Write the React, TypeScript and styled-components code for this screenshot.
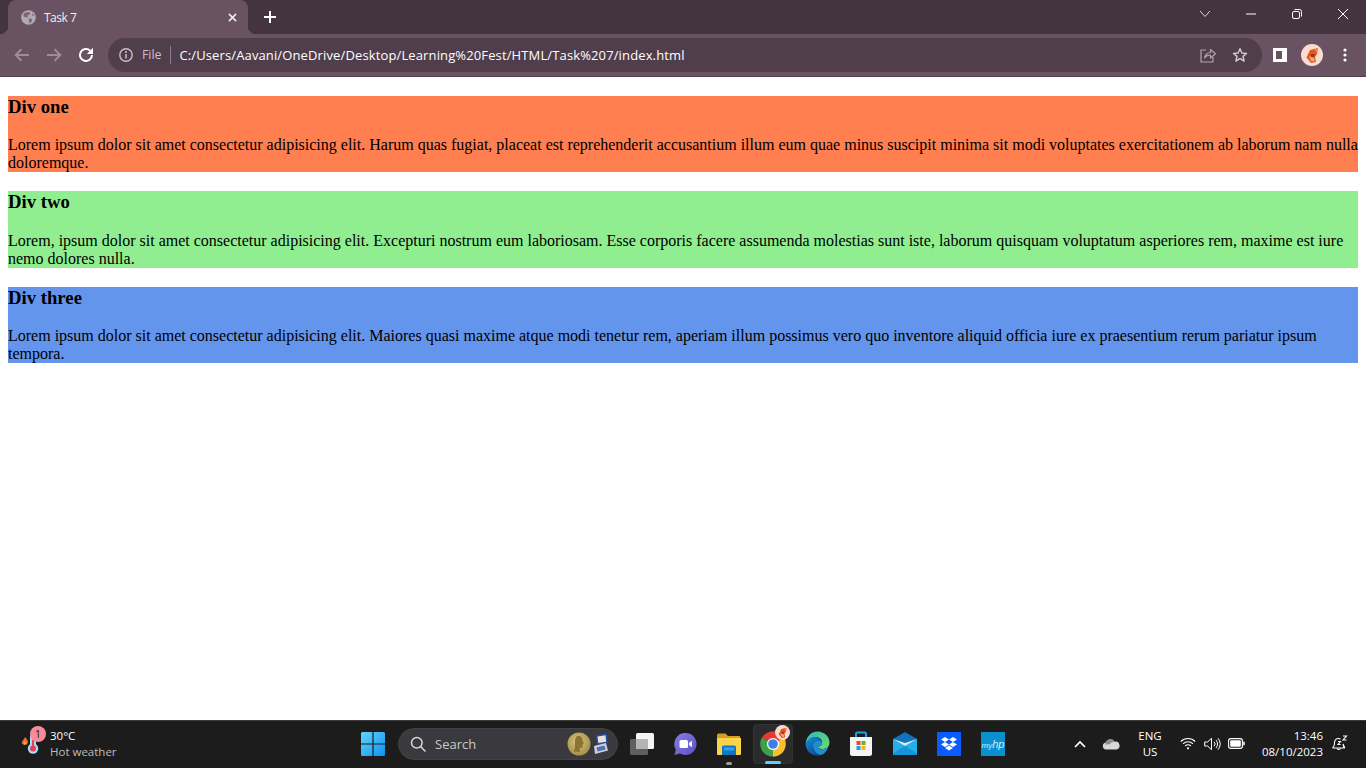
import React from "react";
import styled, { createGlobalStyle } from "styled-components";

const Global = createGlobalStyle`
  html, body { margin: 0; padding: 0; height: 100%; overflow: hidden; background: #fff; }
  #root { height: 100%; }
`;

const uiFont = `"Open Sans", "Noto Sans", "Liberation Sans", sans-serif`;

const Screen = styled.div`
  height: 768px;
  width: 1366px;
  display: flex;
  flex-direction: column;
  font-family: ${uiFont};
`;

const TitleBar = styled.div`
  height: 34px;
  background: #443340;
  display: flex;
  align-items: stretch;
  padding-left: 8px;
  flex: none;
`;

const Tab = styled.div`
  width: 240px;
  background: #695262;
  border-radius: 8px 8px 0 0;
  display: flex;
  align-items: center;
  padding: 0 11px 0 13px;
  box-sizing: border-box;
  position: relative;
  &::before, &::after {
    content: "";
    position: absolute;
    bottom: 0;
    width: 8px;
    height: 8px;
  }
  &::before { left: -8px; background: radial-gradient(circle at 0 0, #443340 8px, #695262 8.5px); }
  &::after { right: -8px; background: radial-gradient(circle at 100% 0, #443340 8px, #695262 8.5px); }
`;

const TabTitle = styled.span`
  flex: 1;
  margin-left: 8px;
  font-size: 12px;
  letter-spacing: -0.5px;
  color: #f1eef0;
`;

const NewTab = styled.div`
  width: 44px;
  display: flex;
  align-items: center;
  justify-content: center;
`;

const Spacer = styled.div`
  flex: 1;
`;

const WinButton = styled.div`
  width: 46px;
  display: flex;
  align-items: center;
  justify-content: center;
  margin-top: -6px;
`;

const Toolbar = styled.div`
  height: 42px;
  background: #695262;
  display: flex;
  align-items: center;
  padding: 0 5px 0 6px;
  border-bottom: 1px solid #54414f;
  flex: none;
`;

const ToolButton = styled.div`
  width: 32px;
  height: 32px;
  flex: none;
  display: flex;
  align-items: center;
  justify-content: center;
`;

const MenuButton = styled(ToolButton)`
  margin-left: 1px;
`;

const Omnibox = styled.div`
  flex: 1;
  height: 34px;
  margin: 0 2px 0 6px;
  background: #503e4c;
  border-radius: 17px;
  display: flex;
  align-items: center;
  padding: 0 6px 0 10px;
`;

const FileLabel = styled.span`
  font-size: 12.5px;
  letter-spacing: -0.1px;
  color: #c9bfc6;
  margin-left: 8px;
  padding-right: 9px;
  border-right: 1px solid #8b7b87;
  line-height: 18px;
`;

const Url = styled.span`
  flex: 1;
  margin-left: 8px;
  font-size: 13px;
  letter-spacing: 0.13px;
  color: #fff;
  white-space: nowrap;
`;

const Page = styled.main`
  flex: 1;
  background: #fff;
  padding: 18.72px 8px 0;
  font-family: "Liberation Serif", "Times New Roman", serif;
  font-size: 16px;
  color: #000;
`;

const Block = styled.section<{ $bg: string }>`
  background: ${(p) => p.$bg};
  margin-bottom: 18.72px;
`;

const Heading = styled.h3`
  font-size: 18.72px;
  font-weight: bold;
  margin: 0 0 18.72px;
`;

const Taskbar = styled.footer`
  height: 48px;
  box-sizing: border-box;
  background: #1c1c1c;
  border-top: 1px solid #3a3a3a;
  padding-bottom: 2px;
  display: flex;
  align-items: center;
  color: #fff;
  flex: none;
`;

const Weather = styled.div`
  width: 351px;
  flex: none;
  display: flex;
  align-items: center;
  padding-left: 18px;
  box-sizing: border-box;
`;

const WeatherIcon = styled.div`
  width: 26px;
  height: 32px;
  position: relative;
  flex: none;
`;

const Badge = styled.span`
  position: absolute;
  left: 12px;
  top: -2px;
  width: 16px;
  height: 16px;
  border-radius: 50%;
  background: #fb8a98;
  color: #1c1c1c;
  font-size: 11px;
  line-height: 16px;
  text-align: center;
`;

const WeatherText = styled.div`
  margin-left: 6px;
  font-size: 11.5px;
  line-height: 16px;
`;

const Muted = styled.div`
  color: #bdbdbd;
`;

const AppSlot = styled.div<{ $active?: boolean }>`
  width: 44px;
  height: 44px;
  flex: none;
  display: flex;
  align-items: center;
  justify-content: center;
  position: relative;
  &::before {
    content: "";
    display: ${(p) => (p.$active ? "block" : "none")};
    position: absolute;
    inset: 2px;
    background: #2b2b2d;
    border: 1px solid #333;
    border-radius: 4px;
  }
  & > svg {
    position: relative;
  }
`;

const Indicator = styled.span<{ $on?: boolean }>`
  position: absolute;
  bottom: ${(p) => (p.$on ? "2px" : "1px")};
  left: 50%;
  transform: translateX(-50%);
  width: ${(p) => (p.$on ? "16px" : "6px")};
  height: 3px;
  border-radius: 2px;
  background: ${(p) => (p.$on ? "#60cdff" : "#9a9a9a")};
`;

const SearchBox = styled.div`
  width: 220px;
  height: 32px;
  margin: 0 1px 0 3px;
  flex: none;
  box-sizing: border-box;
  background: #3a3a3e;
  border-radius: 16px;
  border: 1px solid #434347;
  display: flex;
  align-items: center;
  padding: 0 8px 0 11px;
`;

const SearchText = styled.span`
  flex: 1;
  margin-left: 9px;
  font-size: 13px;
  color: #c8c8c8;
`;

const Tray = styled.div`
  flex: 1;
  display: flex;
  align-items: center;
  justify-content: flex-end;
  padding-right: 11px;
`;

const TrayIcon = styled.div<{ $w: number }>`
  width: ${(p) => p.$w}px;
  flex: none;
  display: flex;
  align-items: center;
  justify-content: center;
`;

const Lang = styled.div`
  width: 46px;
  text-align: center;
  font-size: 11.5px;
  line-height: 16px;
  flex: none;
`;

const Clock = styled.div`
  width: 72px;
  text-align: right;
  font-size: 11.5px;
  line-height: 16px;
  flex: none;
`;

const Line = styled.div`
  white-space: nowrap;
`;

const OverlayGem = styled.span`
  position: absolute;
  top: 3px;
  right: 5px;
  line-height: 0;
`;

const MyHp = styled.div`
  width: 24px;
  height: 24px;
  background: #0a8fcf;
  color: #d5ecf7;
  font-family: "Liberation Sans", sans-serif;
  font-style: italic;
  font-size: 8px;
  line-height: 24px;
  text-align: center;
  & > span {
    font-size: 11px;
  }
`;

const Globe = () => (
  <svg width="15" height="15" viewBox="0 0 16 16">
    <circle cx="8" cy="8" r="7.8" fill="#b4a9b1" />
    <path d="M3 3.5 L7 2 L10 3 L9 5 L7 5.5 L7.5 7.5 L5 8 L2.5 6.5Z M8 9 L12 9.5 L11.5 12 L9.5 14.5 L8.5 12Z M12 3 L14.5 6 L12.5 6.5Z" fill="#7a6674" />
  </svg>
);

const Chrome = () => (
  <svg width="28" height="28" viewBox="0 0 48 48">
    <path d="M24 24 L5 13 A22 22 0 0 1 43 13Z" fill="#e33b2e" />
    <path d="M24 24 L43 13 A22 22 0 0 1 24 46Z" fill="#fbc02d" />
    <path d="M24 24 L24 46 A22 22 0 0 1 5 13Z" fill="#3da14a" />
    <circle cx="24" cy="24" r="10.5" fill="#fff" />
    <circle cx="24" cy="24" r="8.3" fill="#3f7fe8" />
  </svg>
);

const Gem = ({ size }: { size: number }) => (
  <svg width={size} height={size} viewBox="0 0 22 22">
    <circle cx="11" cy="11" r="11" fill="#fbdcd2" />
    <path d="M9 6 L17 4 L16 10 L14 13 L15 18 L10 19 L5.5 13.5Z" fill="#e8561a" />
    <path d="M8 12 L13 14 L13.5 17.5 L10 17Z" fill="#f5a878" />
    <path d="M10 10 L14 10 L13 13 L9.5 12.5Z" fill="#8a3d16" />
    <path d="M13.5 5.5 L17 4 L16 8.5Z" fill="#f68a4e" />
  </svg>
);

export default function App() {
  return (
    <Screen>
      <Global />
      <TitleBar>
        <Tab>
          <Globe />
          <TabTitle>Task 7</TabTitle>
          <svg width="9" height="9" viewBox="0 0 10 10"><path d="M1 1 L9 9 M9 1 L1 9" fill="none" stroke="#f1eef0" strokeWidth="1.7" /></svg>
        </Tab>
        <NewTab>
          <svg width="14" height="14" viewBox="0 0 14 14"><path d="M7 1 V13 M1 7 H13" fill="none" stroke="#fff" strokeWidth="2" /></svg>
        </NewTab>
        <Spacer />
        <WinButton>
          <svg width="12" height="8" viewBox="0 0 12 8"><path d="M1 1 L6 6.5 L11 1" fill="none" stroke="#ddd6db" strokeWidth="1" /></svg>
        </WinButton>
        <WinButton>
          <svg width="10" height="2" viewBox="0 0 10 2"><path d="M0 1 H10" stroke="#fff" strokeWidth="1" /></svg>
        </WinButton>
        <WinButton>
          <svg width="10" height="10" viewBox="0 0 10 10"><rect x="0.5" y="2.5" width="7" height="7" rx="1.5" fill="none" stroke="#fff" /><path d="M2.5 .5 H7.5 A2 2 0 0 1 9.5 2.5 V7.5" fill="none" stroke="#fff" /></svg>
        </WinButton>
        <WinButton>
          <svg width="10" height="10" viewBox="0 0 10 10"><path d="M0 0 L10 10 M10 0 L0 10" fill="none" stroke="#fff" strokeWidth="1" /></svg>
        </WinButton>
      </TitleBar>
      <Toolbar>
        <ToolButton>
          <svg width="16" height="14" viewBox="0 0 16 14"><path d="M15 7 H2 M7.5 1.2 L1.6 7 L7.5 12.8" fill="none" stroke="#9d8d98" strokeWidth="1.9" /></svg>
        </ToolButton>
        <ToolButton>
          <svg width="16" height="14" viewBox="0 0 16 14"><path d="M1 7 H14 M8.5 1.2 L14.4 7 L8.5 12.8" fill="none" stroke="#9d8d98" strokeWidth="1.9" /></svg>
        </ToolButton>
        <ToolButton>
          <svg width="16" height="16" viewBox="0 0 16 16"><path d="M14 8 A6 6 0 1 1 12.2 3.7" fill="none" stroke="#fff" strokeWidth="2" /><path d="M15 .8 V7 H8.8Z" fill="#fff" /></svg>
        </ToolButton>
        <Omnibox>
          <svg width="16" height="16" viewBox="0 0 16 16"><circle cx="8" cy="8" r="6.2" fill="none" stroke="#c9bfc6" strokeWidth="1.4" /><path d="M8 7 V11.5" stroke="#c9bfc6" strokeWidth="1.5" /><circle cx="8" cy="5" r="1" fill="#c9bfc6" /></svg>
          <FileLabel>File</FileLabel>
          <Url>C:/Users/Aavani/OneDrive/Desktop/Learning%20Fest/HTML/Task%207/index.html</Url>
          <ToolButton>
            <svg width="16" height="16" viewBox="0 0 16 16"><path d="M6 3 H1 V15 H13 V10" fill="none" stroke="#b0a3ac" strokeWidth="1.2" /><path d="M4.5 11 C5 7.5 8 5.5 10.5 5.5 V2.5 L15.5 6.8 L10.5 11 V8 C8 8 6 9 4.5 11Z" fill="none" stroke="#b0a3ac" strokeWidth="1.2" strokeLinejoin="round" /></svg>
          </ToolButton>
          <ToolButton>
            <svg width="16" height="16" viewBox="0 0 16 16"><path d="M8 1.8 L9.9 6 L14.5 6.4 L11 9.4 L12.1 14 L8 11.6 L3.9 14 L5 9.4 L1.5 6.4 L6.1 6Z" fill="none" stroke="#d0c8ce" strokeWidth="1.5" strokeLinejoin="round" /></svg>
          </ToolButton>
        </Omnibox>
        <ToolButton>
          <svg width="14" height="14" viewBox="0 0 14 14"><path fillRule="evenodd" d="M0 0 H14 V14 H0Z M3 3 V11 H9 V3Z" fill="#fff" /></svg>
        </ToolButton>
        <ToolButton>
          <Gem size={22} />
        </ToolButton>
        <MenuButton>
          <svg width="4" height="14" viewBox="0 0 4 14"><circle cx="2" cy="2" r="1.6" fill="#fff" /><circle cx="2" cy="7" r="1.6" fill="#fff" /><circle cx="2" cy="12" r="1.6" fill="#fff" /></svg>
        </MenuButton>
      </Toolbar>
      <Page>
        <Block $bg="#ff7f50">
          <Heading>Div one</Heading>
          Lorem ipsum dolor sit amet consectetur adipisicing elit. Harum quas fugiat, placeat est reprehenderit accusantium illum eum quae minus suscipit minima sit modi voluptates exercitationem ab laborum nam nulla doloremque.
        </Block>
        <Block $bg="#90ee90">
          <Heading>Div two</Heading>
          Lorem, ipsum dolor sit amet consectetur adipisicing elit. Excepturi nostrum eum laboriosam. Esse corporis facere assumenda molestias sunt iste, laborum quisquam voluptatum asperiores rem, maxime est iure nemo dolores nulla.
        </Block>
        <Block $bg="#6495ed">
          <Heading>Div three</Heading>
          Lorem ipsum dolor sit amet consectetur adipisicing elit. Maiores quasi maxime atque modi tenetur rem, aperiam illum possimus vero quo inventore aliquid officia iure ex praesentium rerum pariatur ipsum tempora.
        </Block>
      </Page>
      <Taskbar>
        <Weather>
          <WeatherIcon>
            <svg width="26" height="32" viewBox="0 0 26 32">
              <path d="M7 9 C9 11 10.5 13 9.8 15 C9 17.5 5 17.5 4 15.3 C3.2 13.3 6 12 7 9Z" fill="#ee6b2c" />
              <path d="M6.8 13 C8 14 8.3 15 7.8 16 C7 17 5.6 16.5 5.6 15.5 C5.6 14.6 6.4 14 6.8 13Z" fill="#f9b233" />
              <rect x="12" y="6" width="6" height="16" rx="3" fill="#a8dcf5" />
              <circle cx="15" cy="20.5" r="5.2" fill="#a8dcf5" />
              <rect x="14" y="12" width="2" height="9" fill="#e0405e" />
              <circle cx="15" cy="20.5" r="3" fill="#e0405e" />
            </svg>
            <Badge>1</Badge>
          </WeatherIcon>
          <WeatherText>
            <div>30°C</div>
            <Muted>Hot weather</Muted>
          </WeatherText>
        </Weather>
        <AppSlot>
          <svg width="24" height="24" viewBox="0 0 24 24">
            <defs><linearGradient id="win" x1="0" y1="0" x2="1" y2="1"><stop offset="0" stopColor="#5fd6fb" /><stop offset="1" stopColor="#0f90f0" /></linearGradient></defs>
            <path d="M0 1.5 A1.5 1.5 0 0 1 1.5 0 H11.4 V11.4 H0Z M12.6 0 H22.5 A1.5 1.5 0 0 1 24 1.5 V11.4 H12.6Z M0 12.6 H11.4 V24 H1.5 A1.5 1.5 0 0 1 0 22.5Z M12.6 12.6 H24 V22.5 A1.5 1.5 0 0 1 22.5 24 H12.6Z" fill="url(#win)" />
          </svg>
        </AppSlot>
        <SearchBox>
          <svg width="16" height="16" viewBox="0 0 16 16"><circle cx="6.8" cy="6.8" r="5.3" fill="none" stroke="#d8d8d8" strokeWidth="1.5" /><path d="M10.8 10.8 L15 15" stroke="#d8d8d8" strokeWidth="1.6" strokeLinecap="round" /></svg>
          <SearchText>Search</SearchText>
          <svg width="42" height="24" viewBox="0 0 42 24">
            <defs><radialGradient id="gold" cx="0.45" cy="0.4" r="0.7"><stop offset="0" stopColor="#dcc77e" /><stop offset="1" stopColor="#9c8640" /></radialGradient></defs>
            <circle cx="12" cy="12" r="11.5" fill="url(#gold)" />
            <path d="M9.5 4.5 C13 3 16 5.5 15.5 8.5 L17 11.5 L15.5 12.5 L15.5 15.5 L12.5 16 L13 20 L6.5 19.5 C9.5 15.5 6.5 8.5 9.5 4.5Z" fill="#8a7433" />
            <path d="M29 3 L40 1.5 L41 11 L30 13Z" fill="#2a4aa0" />
            <path d="M30.5 4.5 L38.5 3.2 L39.2 9.8 L31.3 11Z" fill="#e6e1d6" />
            <path d="M27 14 L39 11 L41 18.5 L28 22Z" fill="#cfcfd6" />
            <path d="M29.5 15.5 L37.5 13.5 L38.7 17.5 L30.5 19.5Z" fill="#4f6fb8" />
          </svg>
        </SearchBox>
        <AppSlot>
          <svg width="26" height="26" viewBox="0 0 26 26">
            <rect x="2" y="8" width="18" height="16" rx="1.5" fill="#5f5f5f" />
            <rect x="8" y="2" width="18" height="16" rx="1.5" fill="#f4f4f4" />
            <path d="M8 8 H20 V18 H8Z" fill="#b4b4b4" />
          </svg>
        </AppSlot>
        <AppSlot>
          <svg width="24" height="24" viewBox="0 0 24 24">
            <defs><linearGradient id="chat" x1="0" y1="0" x2="1" y2="1"><stop offset="0" stopColor="#8b7de0" /><stop offset="1" stopColor="#5b4fc9" /></linearGradient></defs>
            <path d="M12.5 1 A11 11 0 1 1 7 21.5 L1.5 23 L2.8 17.5 A11 11 0 0 1 12.5 1Z" fill="url(#chat)" />
            <rect x="6.5" y="8" width="8.5" height="8" rx="1.5" fill="#fff" />
            <path d="M16 11 L19 8.8 V15.2 L16 13Z" fill="#fff" />
          </svg>
        </AppSlot>
        <AppSlot>
          <svg width="26" height="24" viewBox="0 0 26 24">
            <path d="M1 3 A1.5 1.5 0 0 1 2.5 1.5 H9.5 L12 4 H24 V10 H1Z" fill="#d69f1c" />
            <path d="M1 6 H25 V22 A1 1 0 0 1 24 23 H2 A1 1 0 0 1 1 22Z" fill="#fbd44b" />
            <path d="M6 15 A1.5 1.5 0 0 1 7.5 13.5 H18.5 A1.5 1.5 0 0 1 20 15 V23 H6Z" fill="#1274c4" />
            <rect x="8" y="15.5" width="10" height="3" fill="#2ea3e8" />
          </svg>
          <Indicator />
        </AppSlot>
        <AppSlot $active>
          <Chrome />
          <Indicator $on />
          <OverlayGem><Gem size={15} /></OverlayGem>
        </AppSlot>
        <AppSlot>
          <svg width="25" height="25" viewBox="0 0 25 25">
            <defs>
              <linearGradient id="edgeA" x1="0" y1="0" x2="1" y2="1"><stop offset="0" stopColor="#2fb8c0" /><stop offset="1" stopColor="#6fdc6a" /></linearGradient>
              <linearGradient id="edgeB" x1="0" y1="0" x2="0.6" y2="1"><stop offset="0" stopColor="#1a8fd8" /><stop offset="1" stopColor="#0c4f98" /></linearGradient>
            </defs>
            <path d="M12.5 0.5 C19.5 0.5 24.5 5.5 24.5 11.5 C24.5 16 21 18 17.5 18 C14.5 18 12 17 12.5 15.5 C16 15.5 17 13.5 17 11.5 C17 8 13.5 5.5 10 6 C5.5 6.5 2.5 9.5 0.7 13 C1 6 6 0.5 12.5 0.5Z" fill="url(#edgeA)" />
            <path d="M0.6 12.5 C2.5 8.5 6 6.2 10 6 C13 6 15.5 7.8 16.5 10 C14 8.8 9 9.5 8 13.5 C7 18 11 23.5 16 24 C14.8 24.4 13.5 24.5 12.5 24.5 C5.5 24.5 0.5 19 0.6 12.5Z" fill="url(#edgeB)" />
            <path d="M8 13.5 C8.5 10.5 12 9 15 9.5 C17 10 17.5 12 16.5 14 C15.5 15.5 13 15.5 12.5 15.5 C12 17.5 15 18.5 18 18 C20 17.8 22 17 23.5 15.5 C22 20.5 19 23 16 24 C11 23.5 7.5 18 8 13.5Z" fill="#1b8fd8" />
          </svg>
        </AppSlot>
        <AppSlot>
          <svg width="24" height="26" viewBox="0 0 24 26">
            <path d="M7 7 V3 A1.5 1.5 0 0 1 8.5 1.5 H15.5 A1.5 1.5 0 0 1 17 3 V7" fill="none" stroke="#1fa3e0" strokeWidth="2" />
            <path d="M1 6 H23 V22.5 A2.5 2.5 0 0 1 20.5 25 H3.5 A2.5 2.5 0 0 1 1 22.5Z" fill="#f5f5f5" />
            <rect x="7.5" y="10" width="4" height="4" fill="#e8492c" />
            <rect x="12.5" y="10" width="4" height="4" fill="#6fb22c" />
            <rect x="7.5" y="15" width="4" height="4" fill="#1ba0e2" />
            <rect x="12.5" y="15" width="4" height="4" fill="#fcb813" />
          </svg>
        </AppSlot>
        <AppSlot>
          <svg width="24" height="23" viewBox="0 0 24 23">
            <path d="M0 7 L12 0 L24 7 V21.5 A1.5 1.5 0 0 1 22.5 23 H1.5 A1.5 1.5 0 0 1 0 21.5Z" fill="#1273bd" />
            <path d="M0 7 L12 14 L24 7 V21.5 A1.5 1.5 0 0 1 22.5 23 H1.5 A1.5 1.5 0 0 1 0 21.5Z" fill="#25aee8" />
            <path d="M0 7 L12 14 L24 7 L12 11 Z" fill="#cfeefc" />
            <path d="M0 21.5 L12 14 L24 21.5 V22 A1 1 0 0 1 23 23 H1 A1 1 0 0 1 0 22Z" fill="#1593d8" />
          </svg>
        </AppSlot>
        <AppSlot>
          <svg width="24" height="24" viewBox="0 0 24 24">
            <rect width="24" height="24" fill="#0a5cff" />
            <path d="M8 5 L12 7.5 L8 10 L4 7.5Z M16 5 L20 7.5 L16 10 L12 7.5Z M8 10 L12 12.5 L8 15 L4 12.5Z M16 10 L20 12.5 L16 15 L12 12.5Z M8 16 L12 13.5 L16 16 L12 18.5Z" fill="#fff" />
          </svg>
        </AppSlot>
        <AppSlot>
          <MyHp>my<span>hp</span></MyHp>
        </AppSlot>
        <Tray>
          <TrayIcon $w={30}>
            <svg width="12" height="8" viewBox="0 0 12 8"><path d="M1 7 L6 2 L11 7" fill="none" stroke="#fff" strokeWidth="1.7" /></svg>
          </TrayIcon>
          <TrayIcon $w={32}>
            <svg width="18" height="12" viewBox="0 0 18 12"><path d="M4 11.5 A3.5 3.5 0 0 1 3.6 4.6 A5 5 0 0 1 12.6 3.8 A3.8 3.8 0 0 1 14.5 11.5Z" fill="#d8d8d8" /><path d="M3.6 4.6 A5 5 0 0 1 12.6 3.8 C10 4 8.5 5 7.5 6.5 C6 6 4.5 6 3.5 7Z" fill="#8a8a8a" /></svg>
          </TrayIcon>
          <Lang><Line>ENG</Line><Line>US</Line></Lang>
          <TrayIcon $w={30}>
            <svg width="16" height="13" viewBox="0 0 16 13" fill="none" stroke="#fff" strokeWidth="1.1"><path d="M.8 4.5 A10 10 0 0 1 15.2 4.5 M3 6.8 A7 7 0 0 1 13 6.8 M5.2 9 A4 4 0 0 1 10.8 9" /><circle cx="8" cy="11.3" r="1.1" fill="#fff" stroke="none" /></svg>
          </TrayIcon>
          <TrayIcon $w={18}>
            <svg width="17" height="14" viewBox="0 0 17 14" fill="none" stroke="#fff" strokeWidth="1"><path d="M.7 5 H3.5 L7.5 1.3 V12.7 L3.5 9 H.7Z" strokeLinejoin="round" /><path d="M10 4.8 A3 3 0 0 1 10 9.2 M12 3 A6 6 0 0 1 12 11 M14 1.3 A8.5 8.5 0 0 1 14 12.7" /></svg>
          </TrayIcon>
          <TrayIcon $w={30}>
            <svg width="17" height="11" viewBox="0 0 17 11"><rect x=".6" y=".6" width="13.8" height="9.8" rx="2.2" fill="none" stroke="#fff" strokeWidth="1.1" /><rect x="2.2" y="2.2" width="10.6" height="6.6" rx="1" fill="#fff" /><rect x="15.2" y="3.5" width="1.5" height="4" rx=".7" fill="#fff" /></svg>
          </TrayIcon>
          <Clock><Line>13:46</Line><Line>08/10/2023</Line></Clock>
          <TrayIcon $w={32}>
            <svg width="17" height="17" viewBox="0 0 17 17" fill="none" stroke="#fff" strokeWidth="1.1"><path d="M1.5 13 C3.5 11.5 3.5 10 3.5 8 C3.5 5.2 5.2 3.5 7.5 3.5 C8.3 3.5 9 3.7 9.5 4 M12 9 C12.1 10.8 12.6 12 13.8 13 Z M1.5 13 H13.8" /><path d="M6 13.5 A2 2 0 0 0 9.5 13.5" /><path d="M12 1 H15.5 L12 5 H15.5 M7 6.5 H9.5 L7 9.5 H9.5" /></svg>
          </TrayIcon>
        </Tray>
      </Taskbar>
    </Screen>
  );
}
